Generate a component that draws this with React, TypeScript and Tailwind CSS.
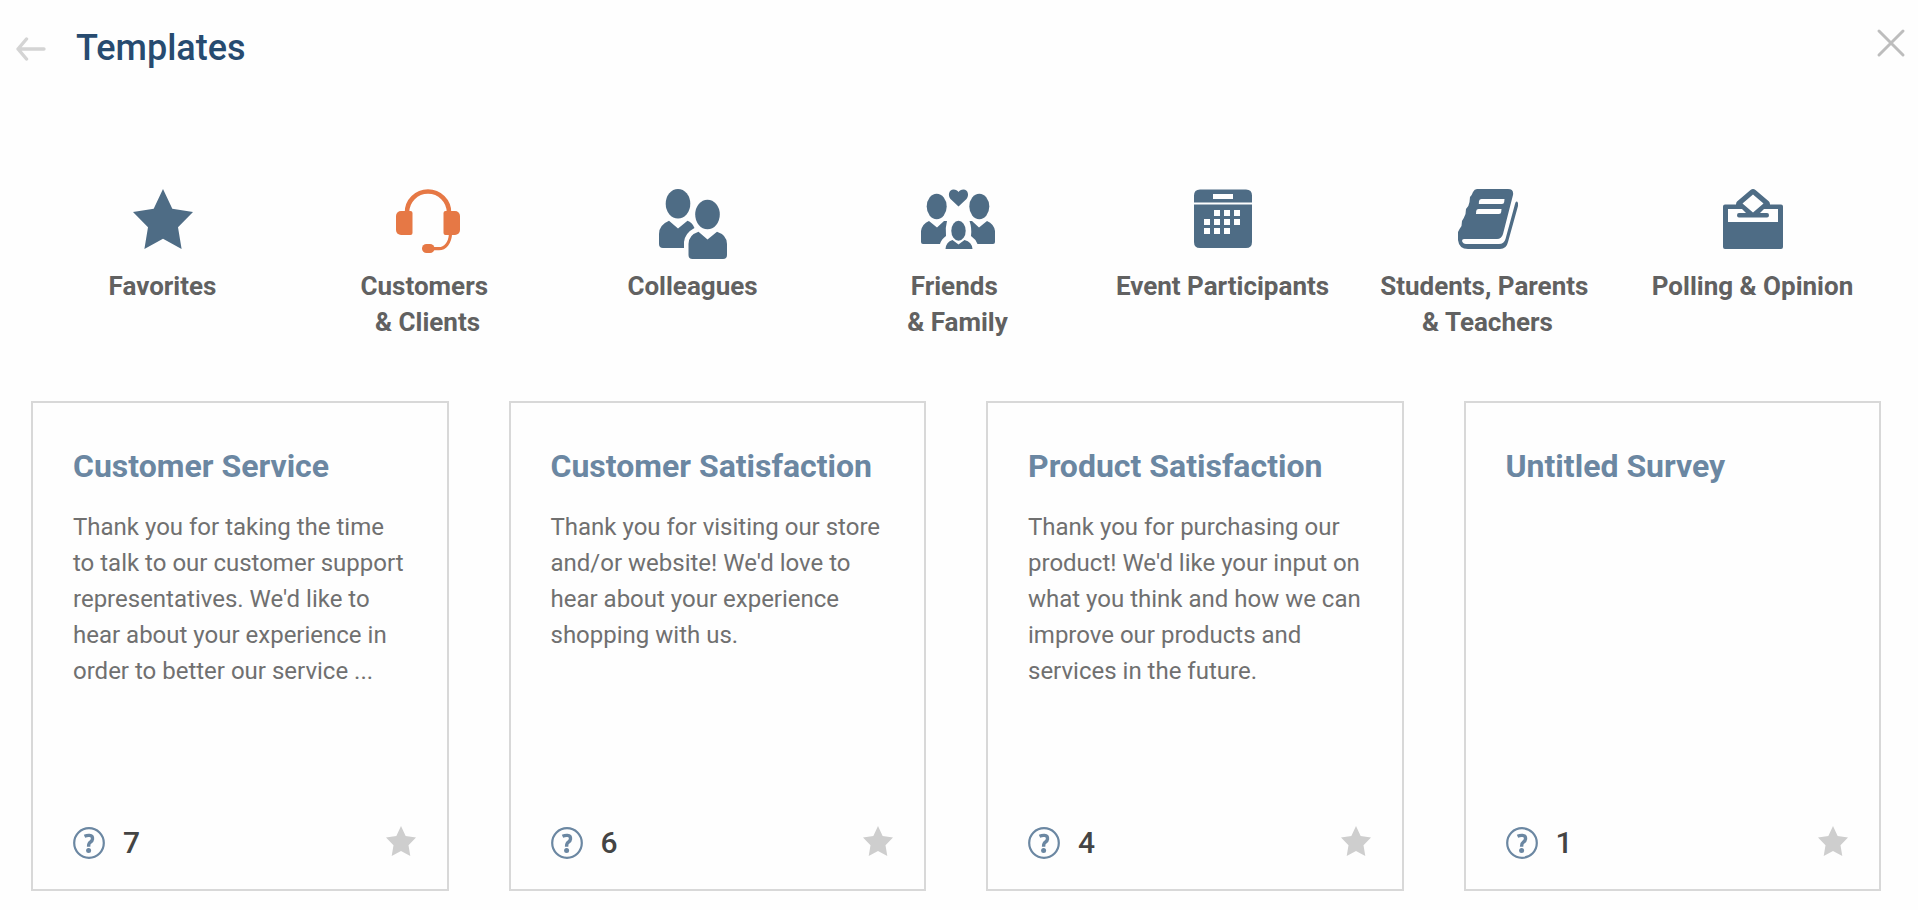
import type { ReactNode } from "react";

const StarIcon = ({ className }: { className: string }) => (
  <svg viewBox="0 0 60 60" className={className} fill="currentColor" aria-hidden="true">
    <path d="M30 0 39.3 19.8 60 23 45 38.3 48.6 60 30 49.8 11.4 60 15 38.3 0 23 20.7 19.8Z" />
  </svg>
);

const HeadsetIcon = () => (
  <svg width="64" height="64" viewBox="0 0 64 64" fill="none" stroke="currentColor" aria-hidden="true">
    <path d="M11 24V23.5a21 21 0 0 1 42 0V24" strokeWidth="4.6" />
    <rect x="0" y="22" width="16" height="24" rx="5" fill="currentColor" stroke="none" />
    <rect x="48" y="22" width="16" height="24" rx="5" fill="currentColor" stroke="none" />
    <path d="M11 22h3.500a2 2 0 0 1 2 2v20a2 2 0 0 1-2 2H11zM53 22h-3.500a2 2 0 0 0-2 2v20a2 2 0 0 0 2 2H53z" fill="currentColor" stroke="none" />
    <path d="M54.500 45C54 54 49 59.700 43 59.700H36" strokeWidth="3.200" />
    <rect x="26" y="55" width="12.500" height="9" rx="4.500" fill="currentColor" stroke="none" />
  </svg>
);

const ColleaguesIcon = () => (
  <svg width="68" height="70" viewBox="0 0 68 70" fill="currentColor" aria-hidden="true">
    <ellipse cx="19" cy="14.800" rx="12.300" ry="14.800" />
    <path d="M10 31.800 19 39.500 28.500 31.800Q33 33 35.500 39 26 44 25 53V59H4Q0 59 0 55V45Q0 36 10 31.800Z" />
    <ellipse cx="48.500" cy="25.500" rx="12.300" ry="14.800" />
    <path d="M39.500 42.700 48.500 50.500 58 42.700Q68 46 68 55V66Q68 70 64 70H33.500Q29.500 70 29.500 66V55Q29.500 46 39.500 42.700Z" />
  </svg>
);

const FamilyIcon = () => (
  <svg width="74" height="60" viewBox="0 0 74 60" fill="currentColor" aria-hidden="true">
    <path d="M37.500 17.500 29.500 10C26.500 6.500 28 .500 32.500 .500c2.500 0 4 1 5 2.500C38.500 1.500 40 .500 42.500 .500c4.500 0 6 6 3 9.500Z" />
    <ellipse cx="15.700" cy="17.500" rx="10" ry="12.700" />
    <ellipse cx="58.300" cy="17.500" rx="10" ry="12.700" />
    <path d="M8 32 16 38.500 23 32H26Q24 39 25 47 20.500 50 19 55H2Q0 55 0 53V42Q1 35 8 32Z" />
    <path d="M66 32 58 38.500 51 32H48.500Q51 39 50 47 54.500 50 56.500 55H72Q74 55 74 53V42Q73 35 66 32Z" />
    <ellipse cx="37.500" cy="41.800" rx="7.200" ry="10" />
    <path d="M31.500 51 37.500 55.500 43.500 51Q51 53 51.500 60H24.500Q25 53 31.500 51Z" />
  </svg>
);

const CalendarIcon = () => (
  <svg width="58" height="60" viewBox="0 0 58 60" fill="currentColor" aria-hidden="true">
    <path d="M6 .500H52Q58 .500 58 6.500V13.500H0V6.500Q0 .500 6 .500ZM19 5v5H39V5Z" fillRule="evenodd" />
    <path
      fillRule="evenodd"
      d="M0 15.500H58V53Q58 59 52 59H6Q0 59 0 53ZM20 21v6h6v-6ZM30 21v6h6v-6ZM40 21v6h6v-6ZM10 30v6h6v-6ZM20 30v6h6v-6ZM30 30v6h6v-6ZM40 30v6h6v-6ZM10 39v6h6v-6ZM20 39v6h6v-6ZM30 39v6h6v-6Z"
    />
  </svg>
);

const BookIcon = () => (
  <svg width="60" height="60" viewBox="0 0 60 60" fill="currentColor" aria-hidden="true">
    <path
      fillRule="evenodd"
      d="M19 0H50Q56 0 55 6L45 45Q43.500 50 39 50H6Q4 50 4 52 5 55 8 55H41Q46 55 47.500 50L57 15Q57.500 12 59 12.500 60.500 13.500 60 17L50 53Q48.500 60 42 60H10Q1 60 0 51V43Q2 39 3.500 37L4 32Q6 29 7.500 25L8 20Q11 17 11.500 13L12 8Q14 6 15 3 16.500 0 19 0ZM23.500 10Q21.500 10 21 12L20.800 15H44Q46 15 46.200 13L46.500 10ZM20.500 20Q18.500 20 18.200 22L18 25H41Q43 25 43.200 23L43.500 20Z"
    />
  </svg>
);

const BallotIcon = () => (
  <svg width="60" height="60" viewBox="0 0 60 60" fill="currentColor" aria-hidden="true">
    <path
      fillRule="evenodd"
      d="M27.500 1Q30 -1 32.500 1L46 12.500Q47 13.500 47 15.500H58Q60 15.500 60 17.500V58Q60 60 58 60H2Q0 60 0 58V17.500Q0 15.500 2 15.500H13Q13 13.500 14 12.500ZM30 5.500 19.500 14.500 30 23.500 40.500 14.500ZM5 20V33H55V20H41L37 24H44Q46 24 46 26.300T44 28.600H16Q14 28.600 14 26.300T16 24H23L19 20Z"
    />
  </svg>
);

const QuestionIcon = () => (
  <svg width="32" height="32" viewBox="0 0 32 32" fill="none" stroke="currentColor" aria-hidden="true">
    <circle cx="16" cy="16" r="14.800" strokeWidth="2.200" />
    <path d="M11.500 9.300Q14 8.200 16.500 8.400 19.800 8.700 19.500 12 19.300 14 17.300 15.200 15.500 16.400 15.600 19.800" strokeWidth="3.400" />
    <circle cx="15.600" cy="23.600" r="2.500" fill="currentColor" stroke="none" />
  </svg>
);

type Category = { label: string; icon: ReactNode; active?: boolean };

const categories: Category[] = [
  { label: "Favorites", icon: <StarIcon className="size-[60px]" /> },
  { label: "Customers \n& Clients", icon: <HeadsetIcon />, active: true },
  { label: "Colleagues", icon: <ColleaguesIcon /> },
  { label: "Friends \n& Family", icon: <FamilyIcon /> },
  { label: "Event Participants", icon: <CalendarIcon /> },
  { label: "Students, Parents \n& Teachers", icon: <BookIcon /> },
  { label: "Polling & Opinion", icon: <BallotIcon /> },
];

const templates = [
  {
    title: "Customer Service",
    text: "Thank you for taking the time to talk to our customer support representatives. We'd like to hear about your experience in order to better our service ...",
    questions: 7,
  },
  {
    title: "Customer Satisfaction",
    text: "Thank you for visiting our store and/or website! We'd love to hear about your experience shopping with us.",
    questions: 6,
  },
  {
    title: "Product Satisfaction",
    text: "Thank you for purchasing our product! We'd like your input on what you think and how we can improve our products and services in the future.",
    questions: 4,
  },
  { title: "Untitled Survey", text: "", questions: 1 },
];

export default function App() {
  return (
    <div className="min-h-screen bg-[#fefefe] pb-4 font-[Roboto,sans-serif]">
      <header className="flex items-start justify-between pt-6 pr-3 pl-4">
        <div className="flex items-center gap-[30px]">
          <button type="button" aria-label="Back" className="pt-0.5 text-[#d4d4d4]">
            <svg width="30" height="24" viewBox="0 0 30 24" fill="none" stroke="currentColor" strokeWidth="3.400" strokeLinecap="round" strokeLinejoin="round" aria-hidden="true">
              <path d="M28 12H2M10.500 2 2 12 10.500 22" />
            </svg>
          </button>
          <h1 className="text-[36px] leading-12 font-medium text-[#274b70]">Templates</h1>
        </div>
        <button type="button" aria-label="Close" className="pt-1 text-[#bdbdbd]">
          <svg width="30" height="30" viewBox="0 0 30 30" fill="none" stroke="currentColor" strokeWidth="3" strokeLinecap="round" aria-hidden="true">
            <path d="M3 3 27 27M27 3 3 27" />
          </svg>
        </button>
      </header>

      <nav aria-label="Template categories" className="mt-[117px] grid grid-cols-7 pr-[33px] pl-[30px]">
        {categories.map((c) => (
          <button key={c.label} type="button" className="flex flex-col items-center">
            <span className={c.active ? "h-[79px] text-[#e67845]" : "h-[79px] text-[#4e6c85]"}>{c.icon}</span>
            <span className="text-[26px] leading-9 font-bold whitespace-pre text-[#616161]">{c.label}</span>
          </button>
        ))}
      </nav>

      <main className="mt-[61px] grid grid-cols-4 gap-[60px] pr-[37px] pl-[31px]">
        {templates.map((t) => (
          <article key={t.title} className="flex min-h-[490px] flex-col border-2 border-[#d8d8d8] pt-[43px] pr-[31px] pb-[28px] pl-10">
            <h2 className="text-[32px] leading-10 font-bold text-[#6b87a2]">{t.title}</h2>
            <p className="mt-[23px] pr-2 text-[24px] leading-9 text-[#707070]">{t.text}</p>
            <div className="mt-auto flex items-center justify-between">
              <div className="flex items-center gap-[18px]">
                <span className="text-[#6b87a2]">
                  <QuestionIcon />
                </span>
                <span className="text-[30px] leading-9 font-medium text-[#444444]">{t.questions}</span>
              </div>
              <button type="button" aria-label={`Add ${t.title} to favorites`} className="pb-1 text-[#cecece]">
                <StarIcon className="size-[30px]" />
              </button>
            </div>
          </article>
        ))}
      </main>
    </div>
  );
}
